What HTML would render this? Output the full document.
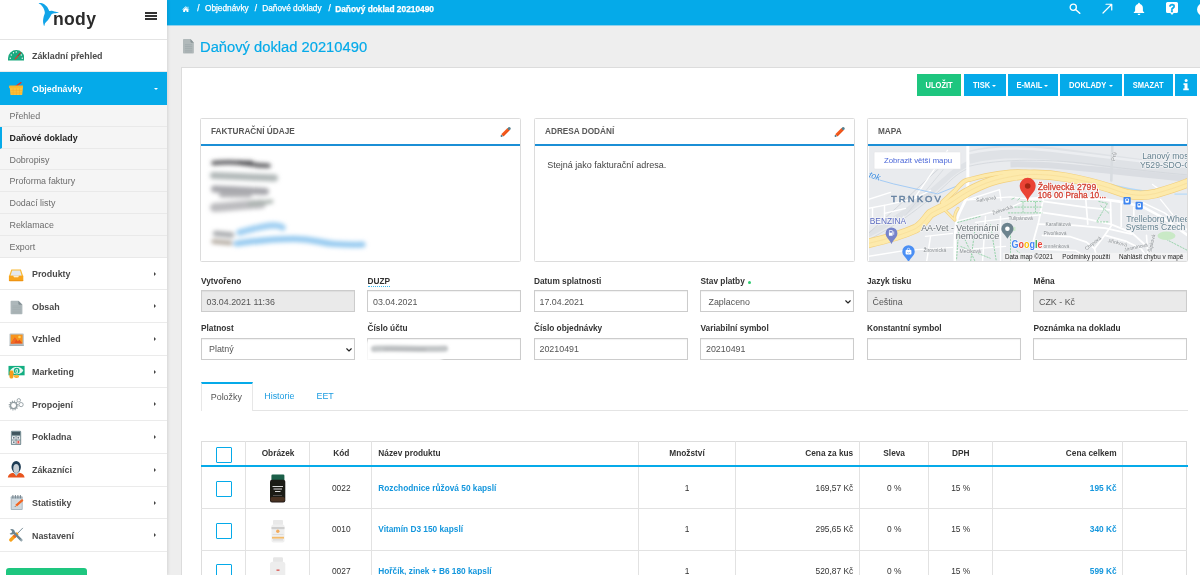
<!DOCTYPE html>
<html lang="cs">
<head>
<meta charset="utf-8">
<title>Daňový doklad 20210490</title>
<style>
*{box-sizing:border-box;margin:0;padding:0}
html,body{width:1200px;height:575px;overflow:hidden;background:#eeeeee;font-family:"Liberation Sans",sans-serif;color:#333;font-size:8.75px}
.abs{position:absolute}
#page{will-change:transform;position:relative;width:1200px;height:575px;overflow:hidden;background:#eeeeee}

/* ---------- sidebar ---------- */
#side{position:absolute;left:0;top:0;width:167px;height:575px;background:#fff;box-shadow:1px 0 3px rgba(0,0,0,.11);z-index:5}
#side .head{position:absolute;left:0;top:0;width:167px;height:39.5px;border-bottom:1px solid #e4e4e4}
.mi{position:absolute;left:0;width:167px;height:32.75px;border-bottom:1px solid #ebebeb;font-weight:bold;font-size:8.9px;color:#4a4a4a;letter-spacing:0}
.mi span.t{position:absolute;left:32px;top:11.400px;line-height:10px;white-space:nowrap}
.mi .car{position:absolute;left:153.500px;top:14.100px;width:0;height:0;border-left:2.6px solid #444;border-top:2.4px solid transparent;border-bottom:2.4px solid transparent}
.mi .ic{position:absolute;line-height:0}
.mi .card{position:absolute;left:153.5px;top:15.5px;width:0;height:0;border-top:2.6px solid #fff;border-left:2.6px solid transparent;border-right:2.6px solid transparent}
.mi.act{background:#05aae9;color:#fff;border-bottom-color:#05aae9}
.sub{position:absolute;left:0;width:167px;height:21.78px;background:#f5f5f5;border-bottom:1px solid #e9e9e9;font-size:8.9px;color:#6c6c6c}
.sub span{position:absolute;left:9.5px;top:6px;line-height:10px;white-space:nowrap}
.sub.cur{color:#222;font-weight:bold;border-left:2px solid #05aae9}
.sub.cur span{left:7.5px}

/* ---------- top bar ---------- */
#top{position:absolute;left:167px;top:0;width:1033px;height:25px;background:#05aae9;color:#fff}
.bc{position:absolute;top:4px;font-size:8.280px;line-height:10px;color:#fff;white-space:nowrap;-webkit-text-stroke:.25px #fff}
#crumb{position:absolute;left:15.5px;top:3.5px;font-size:8.3px;font-weight:bold;line-height:10px;white-space:nowrap;letter-spacing:-.05px}

/* ---------- title ---------- */
#title{position:absolute;left:200.4px;top:37.100px;font-size:15.250px;transform:scaleX(.966);transform-origin:0 50%;-webkit-text-stroke:.2px #05aae9;line-height:19px;color:#05aae9;white-space:nowrap}

/* ---------- panel ---------- */
#panel{position:absolute;left:180.5px;top:67px;width:1030px;height:520px;background:#fff;border:1px solid #dcdcdc}
.btn{position:absolute;top:74px;height:22px;background:#05aae9;color:#fff;font-weight:bold;font-size:8.400px;text-align:center;line-height:23px;white-space:nowrap}
.btn u{display:inline-block;text-decoration:none;transform:scaleX(.9);transform-origin:50% 50%;margin:0 -2px}
.btn.g{background:#1ec67f}
.btn i{display:inline-block;width:0;height:0;border-top:2.700px solid #fff;border-left:2.600px solid transparent;border-right:2.600px solid transparent;vertical-align:middle;margin-left:2.300px;margin-top:.5px}

.box{position:absolute;top:118px;width:321px;height:143.5px;border:1px solid #dcdcdc;border-radius:1.5px;background:#fff}
.box .bh{position:absolute;left:0;top:0;right:0;height:26.600px;border-bottom:2px solid #1b8fd6}
.box .bh b{position:absolute;left:10px;top:7px;font-size:9px;line-height:10px;color:#585858;white-space:nowrap;transform:scaleX(.915);transform-origin:0 50%}

.lbl{position:absolute;font-weight:bold;font-size:8.3px;line-height:10px;color:#333;white-space:nowrap}
.inp{position:absolute;width:154px;height:21.500px;border:1px solid #ccc;background:#fff;font-size:8.9px;line-height:10px;color:#555;box-shadow:inset 0 1px 1px rgba(0,0,0,.06)}
.inp span{position:absolute;left:5px;top:5.6px;white-space:nowrap}
.inp.dis{background:#eaeaea}
.inp.r2 span{top:4.600px}
.inp.sel span{left:7.500px}
.inp.sel.r2 span{top:4.600px}
.inp .chv{position:absolute;left:144.300px;top:8.800px}

/* ---------- table ---------- */
#tbl{position:absolute;left:200.500px;top:441px;width:986.500px;height:140px;border-left:1px solid #ddd;border-right:1px solid #ddd;border-top:1px solid #ddd}
.vl{position:absolute;top:441px;width:1px;height:140px;background:#e2e2e2}
.hl{position:absolute;left:200.5px;width:986.5px;height:1px;background:#e2e2e2}
.th{position:absolute;top:447.800px;font-weight:bold;font-size:8.3px;line-height:10px;color:#333;white-space:nowrap}
.td{position:absolute;font-size:8.400px;line-height:10px;color:#333;white-space:nowrap}
.td.a{color:#1597dd;font-weight:bold;font-size:8.3px}
.cb{position:absolute;left:216px;width:16px;height:16px;border:1.6px solid #05aae9;border-radius:1px;background:#fff}
</style>
</head>
<body>
<div id="page">

<!-- MAIN BG / TOP BAR -->
<div id="top">
<svg class="abs" style="left:15.200px;top:5.600px" width="7.600" height="6" viewBox="0 0 30 24"><path d="M15 1 L29.500 13.500 l-1.600 1.900 L15 4.500 2.100 15.400 .5 13.500z M15 6.500 l10.500 8.800 V23 a1 1 0 0 1-1 1 H18 v-6.500 h-6 V24 H5.500 a1 1 0 0 1-1-1 v-7.700z M22 2.500 h3.500 v5.500 l-3.500-3z" fill="#fff"/></svg>
<div class="bc" style="left:30.300px">/</div>
<div class="bc" style="left:38px">Objednávky</div>
<div class="bc" style="left:87.800px">/</div>
<div class="bc" style="left:95.300px">Daňové doklady</div>
<div class="bc" style="left:161.600px">/</div>
<div class="bc" style="left:168.200px;font-weight:bold;font-size:8.360px">Daňový doklad 20210490</div>
<!-- right icons -->
<svg class="abs" style="left:902.300px;top:3px" width="12" height="11" viewBox="0 0 24 22"><circle cx="8.500" cy="8.500" r="6.200" fill="none" stroke="#fff" stroke-width="2.600"/><path d="M13 13 L21.500 20.500" stroke="#fff" stroke-width="3" stroke-linecap="round"/></svg>
<svg class="abs" style="left:935px;top:3.200px" width="11" height="11" viewBox="0 0 22 22"><path d="M2 20 L19 3 M8 2.500 H19.500 V14" fill="none" stroke="#fff" stroke-width="2.400" stroke-linecap="round" stroke-linejoin="round"/></svg>
<svg class="abs" style="left:966.300px;top:1.900px" width="12" height="13.500" viewBox="0 0 24 27"><path d="M12 1.500 a1.800 1.800 0 0 1 1.800 1.800 v.7 c3.800 .9 6 4 6 8 v6 l2.700 3 v1 H1.500 v-1 l2.700-3 v-6 c0-4 2.200-7.100 6-8 v-.7 A1.800 1.800 0 0 1 12 1.500z M9.300 23.500 h5.400 a2.700 2.700 0 0 1-5.400 0z" fill="#fff"/></svg>
<svg class="abs" style="left:999px;top:2.300px" width="12" height="13" viewBox="0 0 24 26"><path d="M3 0 h18 a3 3 0 0 1 3 3 v16 a3 3 0 0 1-3 3 h-5.500 l-3.500 4 -3.500-4 H3 a3 3 0 0 1-3-3 V3 a3 3 0 0 1 3-3z" fill="#fff"/><text x="12" y="19" font-size="22" font-weight="bold" text-anchor="middle" fill="#05aae9" stroke="#05aae9" stroke-width=".8" font-family="Liberation Sans">?</text></svg>
<div class="abs" style="left:1029.800px;top:2.500px;width:13px;height:13px;border-radius:50%;background:#fff"></div>
</div>

<svg class="abs" style="left:182.900px;top:39.300px" width="11.600" height="14.600" viewBox="0 0 24 28" preserveAspectRatio="none"><path d="M1.500 0 h14 l7 7 v19.500 a1.500 1.500 0 0 1-1.500 1.500 h-19.500 a1.500 1.500 0 0 1-1.500-1.500 v-25 a1.500 1.500 0 0 1 1.500-1.500z" fill="#b1b9ba"/><path d="M15.500 0 l7 7 h-5.500 a1.500 1.500 0 0 1-1.500-1.500z" fill="#899497"/><g stroke="#9aa4a7" stroke-width="1.200"><path d="M4 11 h15 M4 14.500 h15 M4 18 h15 M4 21.500 h15 M4 25 h15"/></g></svg>
<div class="abs" style="left:167px;top:25px;width:1033px;height:1px;background:#90d1ec"></div>
<div id="title">Daňový doklad 20210490</div>

<div id="panel"></div>

<!-- buttons -->
<div class="btn g" style="left:917px;width:44.25px"><u>ULOŽIT</u></div>
<div class="btn" style="left:964px;width:41.75px"><u>TISK</u><i></i></div>
<div class="btn" style="left:1007.75px;width:50.25px"><u>E-MAIL</u><i></i></div>
<div class="btn" style="left:1060.25px;width:61.75px"><u>DOKLADY</u><i></i></div>
<div class="btn" style="left:1124.25px;width:48.5px"><u>SMAZAT</u></div>
<div class="btn" style="left:1175.25px;width:21.5px"><svg style="position:absolute;left:8px;top:5.300px" width="6" height="11.500" viewBox="0 0 12 23"><circle cx="6.200" cy="3.200" r="3" fill="#fff"/><path d="M1 8.500 h8 v10.500 h2.500 v3.500 h-11 v-3.500 h2.500 v-7 h-2z" fill="#fff"/></svg></div>

<!-- boxes -->
<div class="box" style="left:200px;overflow:hidden"><div class="bh"><b>FAKTURAČNÍ ÚDAJE</b></div>
<svg class="abs" style="left:0;top:27px" width="319" height="115" viewBox="201.500 146 319 115">
<defs><filter id="bl" x="-20%" y="-80%" width="140%" height="260%"><feGaussianBlur stdDeviation="1.500"/></filter><filter id="bl2" x="-20%" y="-80%" width="140%" height="260%"><feGaussianBlur stdDeviation="2.100"/></filter></defs>
<g fill="none" stroke-linecap="round" filter="url(#bl2)">
<path d="M214 163 C230 161.500 242 162.500 250 164 S266 165.800 269 165.800" stroke="#626265" stroke-width="4.600"/>
<path d="M240 162.500 h12" stroke="#4a4a4d" stroke-width="3.500"/>
<path d="M214 175.500 C235 176.500 255 177.500 275 178" stroke="#b0b7b7" stroke-width="7"/>
<path d="M215 189 C232 189.500 250 191 266 191.500" stroke="#a6a6ab" stroke-width="7"/>
<path d="M222 195 h28" stroke="#b0b0b4" stroke-width="5"/>
<path d="M215 207.500 C230 206.500 245 205 262 204" stroke="#bcbcbf" stroke-width="9"/>
<path d="M250 204 L272 201.500" stroke="#aab3af" stroke-width="4"/>
<path d="M216 233.500 L232 235" stroke="#a9abae" stroke-width="5.500"/>
<path d="M240 232.500 C250 230 262 226 272 225.500 S282 227 283 227.500" stroke="#9fcff2" stroke-width="6.500"/>
<path d="M214 241.500 L231 243" stroke="#b3aaa0" stroke-width="4.500"/>
<path d="M237 243.500 C255 241 275 238.800 295 238.800 S320 243 335 244 S355 245 363 244.500" stroke="#96caf0" stroke-width="6.200"/>
</g></svg>
<svg class="abs" style="left:298.500px;top:6.800px" width="12" height="12" viewBox="499.500 125.800 12 12"><path d="M501.900 135.100 L508.100 128.900" stroke="#f4581c" stroke-width="3.200"/><path d="M502.600 135.800 L508.800 129.600" stroke="#e04a10" stroke-width="0.900" opacity=".7"/><circle cx="508.700" cy="128.300" r="1.500" fill="#547f8d"/><circle cx="501.100" cy="135.800" r="1.050" fill="#4b7786"/></svg>
</div>
<div class="box" style="left:534px"><div class="bh"><b>ADRESA DODÁNÍ</b></div><svg class="abs" style="left:298.500px;top:6.800px" width="12" height="12" viewBox="499.500 125.800 12 12"><path d="M501.900 135.100 L508.100 128.900" stroke="#f4581c" stroke-width="3.200"/><path d="M502.600 135.800 L508.800 129.600" stroke="#e04a10" stroke-width="0.900" opacity=".7"/><circle cx="508.700" cy="128.300" r="1.500" fill="#547f8d"/><circle cx="501.100" cy="135.800" r="1.050" fill="#4b7786"/></svg>

  <div class="abs" style="left:12.300px;top:40.500px;font-size:9px;line-height:10px;color:#444;white-space:nowrap">Stejná jako fakturační adresa.</div>
</div>
<div class="box" style="left:866.5px;overflow:hidden"><div class="bh"><b>MAPA</b></div>
<!--MAP-->
<svg class="abs" style="left:1px;top:26.600px" width="319" height="115.400" viewBox="868.500 145.600 319 115.400" font-family="Liberation Sans, sans-serif">
<rect x="860" y="140" width="340" height="130" fill="#e9ebee"/>
<!-- rail yard bands -->
<g fill="none" stroke-linecap="butt">
<path d="M968 157 C990 151 1020 150 1050 153 C1090 158 1140 165 1192 172" stroke="#dfe2e6" stroke-width="13"/>
<path d="M1010 164 C1050 163 1100 170 1192 179" stroke="#dadde2" stroke-width="6"/>
<path d="M968 153 C990 147.500 1020 147 1050 150 C1090 155 1140 161 1192 167" stroke="#eceef1" stroke-width="2.500"/>
<path d="M858 239 C895 222 925 197 945 179 C952 172 960 167 968 163" stroke="#dfe2e6" stroke-width="5.500"/>
<path d="M858 244 C898 226 930 199 948 182 C955 175 961 171 968 168" stroke="#d6dade" stroke-width="1"/>
<path d="M938 168.500 L867 234" stroke="#cdd1d6" stroke-width=".8"/>
<path d="M943 169 L905 215" stroke="#d3d7db" stroke-width=".7"/>
<path d="M968 166 C1000 158 1050 158 1100 165 C1130 169 1160 172 1192 175" stroke="#d2d6db" stroke-width=".8"/>
</g>
<!-- streets (white) -->
<g fill="none" stroke="#fff" stroke-width="1.450" stroke-linecap="round" stroke-linejoin="round">
<path d="M967.300 145 V187.500" stroke-width="3"/>
<path d="M966.500 196.500 C963 205 957.500 213 956 221 C954.500 232 954 246 954.500 262" stroke-width="2.800"/>
<path d="M1111.800 145 L1110.800 180" stroke="#d8dce0" stroke-width="2.600"/>
<path d="M966.500 199.600 L999 189.200 L1000.600 200.200"/>
<path d="M968 199.500 L1010 196.500 L1027 198.500"/>
<path d="M956 221 L1010 206.900 L1022 201.500 L1040 201.200"/>
<path d="M975 222 L1010 217.500 L1040 214.500"/>
<path d="M1027 198.500 L1048 197.500 L1100 198.500 L1123 201.700 L1143.300 207 L1163.300 217.700 L1187.300 235" stroke-width="2.600"/>
<path d="M1141 201.500 L1164 212.500 L1187.300 230" stroke-width="1.500"/>
<path d="M1043 201 L1086 207 L1110 209.500" stroke-width="1.700"/>
<path d="M1039.300 211.700 L1084.700 218.300 L1110 223.700 L1131.300 232.300 L1146 245.700" stroke-width="1.900"/>
<path d="M1038 223.700 L1074 225 L1104.700 227.700 L1131.300 233.700" stroke-width="1.700"/>
<path d="M1042 235 L1070 236.300 L1086 241.700 L1094 248.300 L1098 262" stroke-width="1.700"/>
<path d="M1104.700 235 L1126 241 L1140.700 248.300 L1150 262" stroke-width="1.700"/>
<path d="M1085.300 199 L1087.300 223.700 M1110 201 L1110.700 225.700 L1104 235 L1094 248.300 M1120.700 203 V226 M1133.300 207 V215" stroke-width="1.700"/>
<path d="M1146 235 L1147.300 253.700" stroke-width="1.600"/>
<path d="M1042.700 199 L1038 222 L1033 240" stroke-width="1.800"/>
<path d="M1033 248.500 L1075 250 L1094 262" stroke-width="1.500"/>
<path d="M1160 199 L1172 214" stroke-width="1.300"/>
<path d="M1152 184 C1156 188 1158 186 1157 192" stroke-width="1.300"/>
<path d="M868 208 L886 204.500 L912 199 L930 190"/>
<path d="M868 222.500 H884 V205"/>
<path d="M872 208 V222"/>
<path d="M884 213 L905 208"/>
<path d="M868 199 L890 192"/>
<path d="M905 250 L952 247"/>
<path d="M925 236 L952 233"/>
<path d="M930 236 L926 262"/>
<path d="M955 238 L1000 236"/>
<path d="M955 250 L1005 246"/>
<path d="M985 216 L982 262"/>
<path d="M1000 216 V262"/>
<path d="M868 256 L905 250"/>
<path d="M947 150 L915 196" stroke-width="1.300"/>
</g>
<!-- water -->
<path d="M866 176 L893 183.500 L937 193.500 L958 185" fill="none" stroke="#9cc7f5" stroke-width=".9"/>
<path d="M1112 184.500 C1122 186.500 1134 191 1150 190.500" fill="none" stroke="#b3d8f7" stroke-width="1.500"/>
<path d="M1174 193.700 H1187" fill="none" stroke="#b8dbf8" stroke-width="1.300"/>
<!-- green paths -->
<g fill="none" stroke="#8fd0a4" stroke-width=".9" stroke-dasharray="2.200 .9">
<path d="M1020 201.200 H1042 M1014 206.700 H1042 M1007.500 212.500 H1042 M1022.500 201 V212 M1035 201 V212"/>
<path d="M956.800 222.100 L980 216 M958 232 L956 260 M963 236 L975 262 M975 225 L970 262 M960 246 L990 258 M990 224 L996 262"/>
<path d="M1010 226 V262 M1016 250 L1030 262"/>
<path d="M1098 201 L1107 203 L1096 221.500 L1108 221.500 M1100 205 L1109 213.500"/>
<path d="M1160 236 L1187 250"/>
<path d="M1100 187 l5 -1 -3 4"/>
</g>
<path d="M1011 199 l3 -1.500 M1017 200 l2.500 -2.500" stroke="#8fd0a4" stroke-width=".8" fill="none"/>
<rect x="1010.500" y="226.500" width="4.500" height="4" fill="#cfeccf"/>
<ellipse cx="1166" cy="235.300" rx="9" ry="4.300" fill="#c9e9c6"/>
<!-- highway -->
<g fill="none" stroke-linecap="round" stroke-linejoin="round">
<path d="M856 246 L868 243 C890 237.800 905 233 915 228.300 C922 224.700 926 217 930 213.200 C937 209 943 207 948.300 203.800 C955 199.500 960 195.500 966.500 191.900 C973 188 979 185.500 984.800 183.100 C993 180 1001 178 1010 176.400 C1017 175 1021 174.500 1026 174.200 C1040 173.500 1055 175 1066 177 C1082 180 1096 183.500 1109 187.600 C1117 190.500 1124 193 1130 194 C1139 195.500 1147 195 1155.600 193 C1166 190 1176 187 1186 183 L1196 178.500" stroke="#f2d07f" stroke-width="9.600"/>
<path d="M942 202 C946 198 950 194.500 954.400 190.400 C958 186 961 182 965.300 180.100 C967 179.300 968.500 179 970.200 178.900 C975 177.500 980 176.200 984.800 175.200 C993 173.500 1001 172.300 1010 171.600 C1018 171 1024 171.300 1032 172.300" stroke="#f2d07f" stroke-width="4.800"/>
<path d="M944 209.500 C947.500 212.500 950.500 216.500 954.400 219.700 M957.500 208 C955 211.500 953.500 215.500 954.400 219.700" stroke="#f2d07f" stroke-width="3"/>
<path d="M856 246 L868 243 C890 237.800 905 233 915 228.300 C922 224.700 926 217 930 213.200 C937 209 943 207 948.300 203.800 C955 199.500 960 195.500 966.500 191.900 C973 188 979 185.500 984.800 183.100 C993 180 1001 178 1010 176.400 C1017 175 1021 174.500 1026 174.200 C1040 173.500 1055 175 1066 177 C1082 180 1096 183.500 1109 187.600 C1117 190.500 1124 193 1130 194 C1139 195.500 1147 195 1155.600 193 C1166 190 1176 187 1186 183 L1196 178.500" stroke="#fdeaac" stroke-width="8.200"/>
<path d="M942 202 C946 198 950 194.500 954.400 190.400 C958 186 961 182 965.300 180.100 C967 179.300 968.500 179 970.200 178.900 C975 177.500 980 176.200 984.800 175.200 C993 173.500 1001 172.300 1010 171.600 C1018 171 1024 171.300 1032 172.300" stroke="#fdeaac" stroke-width="3.500"/>
<path d="M944 209.500 C947.500 212.500 950.500 216.500 954.400 219.700 M957.500 208 C955 211.500 953.500 215.500 954.400 219.700" stroke="#fdeaac" stroke-width="1.800"/>
<path d="M856 246 L868 243 C890 237.800 905 233 915 228.300 C922 224.700 926 217 930 213.200 C937 209 943 207 948.300 203.800 C955 199.500 960 195.500 966.500 191.900 C973 188 979 185.500 984.800 183.100 C993 180 1001 178 1010 176.400 C1017 175 1021 174.500 1026 174.200 C1040 173.500 1055 175 1066 177 C1082 180 1096 183.500 1109 187.600 C1117 190.500 1124 193 1130 194 C1139 195.500 1147 195 1155.600 193 C1166 190 1176 187 1186 183 L1196 178.500" stroke="#f6dc98" stroke-width=".7"/>
</g>
<!-- labels -->
<text x="890.500" y="201.800" font-size="9.500" fill="#6682a1" textLength="49.800" lengthAdjust="spacing" stroke="#6682a1" stroke-width=".45">TRNKOV</text>
<text x="869.300" y="223.600" font-size="8.500" fill="#5c6bc0" stroke="#f4f5f7" stroke-width="1.600" paint-order="stroke" textLength="36.200" lengthAdjust="spacingAndGlyphs">BENZINA</text>
<g font-size="8.700" fill="#6b7378" stroke="#f4f5f6" stroke-width="1.600" paint-order="stroke">
<text x="920.700" y="230.200" textLength="77.500" lengthAdjust="spacingAndGlyphs">AA-Vet - Veterinární</text>
<text x="955.300" y="238.700" textLength="43.500" lengthAdjust="spacingAndGlyphs">nemocnice</text>
</g>
<g font-size="8.600" fill="#668290" stroke="#f2f3f5" stroke-width="1.600" paint-order="stroke">
<text x="1141.700" y="158.900">Lanový most</text>
<text x="1139.400" y="167.900">Y529-SDO-ČD</text>
<text x="1125.700" y="221.200">Trelleborg Wheel</text>
<text x="1125.200" y="230">Systems Czech</text>
</g>
<g font-size="8.600" fill="#d23f31">
<text x="1037.200" y="189.200" textLength="61" lengthAdjust="spacingAndGlyphs" stroke="#fff" stroke-width="2" stroke-linejoin="round">Želivecká 2799,</text>
<text x="1037.200" y="197.600" textLength="68.500" lengthAdjust="spacingAndGlyphs" stroke="#fff" stroke-width="2" stroke-linejoin="round">106 00 Praha 10...</text>
<text x="1037.200" y="189.200" textLength="61" lengthAdjust="spacingAndGlyphs" stroke="#d23f31" stroke-width=".3">Želivecká 2799,</text>
<text x="1037.200" y="197.600" textLength="68.500" lengthAdjust="spacingAndGlyphs" stroke="#d23f31" stroke-width=".3">106 00 Praha 10...</text>
</g>
<g font-size="5" fill="#8a8f94" stroke="#f1f2f3" stroke-width=".8" paint-order="stroke">
<text x="976" y="201.800" transform="rotate(-9 976 201.800)">Šalvijová</text>
<text x="992.500" y="214.300" transform="rotate(-18 992.500 214.300)">Želivecká</text>
<text x="1008" y="219.200">Tulipánová</text>
<text x="923" y="251.200">Žirovnická</text>
<text x="959" y="253">Mečíková</text>
<text x="1045" y="225.800">Karafiátová</text>
<text x="1043" y="234.500">Pivoňková</text>
<text x="1043" y="247.300">omněnková</text>
<text x="1086" y="250" transform="rotate(-38 1086 250)">Chrpová</text>
<text x="1107" y="241.500" transform="rotate(14 1107 241.500)">Jiřinková</text>
<text x="1124" y="251" transform="rotate(-12 1124 251)">Jasmínová</text>
<text x="1151" y="252" transform="rotate(-78 1151 252)">Šípková</text>
<text x="1114.500" y="161" transform="rotate(-80 1114.500 161)" font-size="5.800">Prů</text>
</g>
<text x="863.500" y="175" font-size="8.600" fill="#3f8ee0" font-style="italic" transform="rotate(19 863.500 175)" stroke="#eef0f2" stroke-width="1" paint-order="stroke">otok</text>
<!-- poi markers -->
<g>
<path d="M891 243.500 c-2.800 -5 -5.900 -6.800 -5.900 -10.600 a5.900 5.900 0 0 1 11.800 0 c0 3.800 -3.100 5.600 -5.900 10.600z" fill="#7683ca"/>
<rect x="888.400" y="229.800" width="3.700" height="5.600" rx=".5" fill="#fff"/><rect x="889.100" y="230.600" width="2.300" height="1.700" fill="#7683ca"/><path d="M893.200 231 v3.400" stroke="#fff" stroke-width=".7"/>
<path d="M908 261.500 c-3 -5 -6.200 -6.500 -6.200 -10.500 a6.200 6.200 0 0 1 12.400 0 c0 4 -3.200 5.500 -6.200 10.500z" fill="#4b8ff4"/>
<rect x="905.100" y="249.600" width="5.800" height="4.400" rx=".7" fill="#fff"/><path d="M906.600 249.600 a1.400 1.700 0 0 1 2.800 0" fill="none" stroke="#fff" stroke-width=".7"/><path d="M906.800 251.600 a1.200 1 0 0 0 2.400 0" fill="none" stroke="#4b8ff4" stroke-width=".5"/>
<path d="M1006.900 238.400 c-3 -5 -6.100 -6.500 -6.100 -10 a6.100 6.100 0 0 1 12.200 0 c0 3.500 -3.100 5 -6.100 10z" fill="#6c838e"/><circle cx="1006.900" cy="228.300" r="2.300" fill="#fff"/>
<g fill="#3d85f0"><rect x="1123" y="196.600" width="7.200" height="7.600" rx=".8"/><rect x="1135.100" y="201.400" width="7.200" height="7.600" rx=".8"/></g>
<g fill="#fff"><rect x="1124.800" y="198" width="3.600" height="4.300" rx=".8"/><rect x="1136.900" y="202.800" width="3.600" height="4.300" rx=".8"/></g>
<g fill="#3d85f0"><rect x="1125.600" y="198.800" width="2" height="1.600"/><rect x="1137.700" y="203.600" width="2" height="1.600"/></g>
</g>
<!-- red pin -->
<path d="M1027.200 201.200 c-1.200 -6.500 -8 -9 -8 -15.800 a8 8 0 0 1 16 0 c0 6.800 -6.800 9.300 -8 15.800z" fill="#ea4335"/>
<circle cx="1027.200" cy="185.600" r="2.800" fill="#a52714"/>
<!-- zobrazit button -->
<rect x="873.600" y="151.600" width="86.500" height="17" rx="1" fill="#fff" stroke="#e2e3e5" stroke-width=".5"/>
<text x="883.500" y="162.700" font-size="7.600" fill="#4a66d8" textLength="68" lengthAdjust="spacingAndGlyphs">Zobrazit větší mapu</text>
<!-- google logo -->
<g font-size="10.700" font-weight="bold" stroke="#fff" stroke-width="1.200" paint-order="stroke">
<text x="1011" y="247.700" textLength="31" lengthAdjust="spacingAndGlyphs"><tspan fill="#4285f4">G</tspan><tspan fill="#ea4335">o</tspan><tspan fill="#fbbc05">o</tspan><tspan fill="#4285f4">g</tspan><tspan fill="#34a853">l</tspan><tspan fill="#ea4335">e</tspan></text>
</g>
<!-- attribution -->
<rect x="1002.500" y="252.400" width="185" height="8" fill="#f5f5f5" opacity=".75"/>
<g font-size="7.100" fill="#222">
<text x="1004.500" y="258.500" textLength="48" lengthAdjust="spacingAndGlyphs">Data map ©2021</text>
<text x="1061.800" y="258.500" textLength="48" lengthAdjust="spacingAndGlyphs">Podmínky použití</text>
<text x="1118.500" y="258.500" textLength="64.300" lengthAdjust="spacingAndGlyphs">Nahlásit chybu v mapě</text>
</g>
</svg>
<!--/MAP-->
</div>


<!-- form -->
<div class="lbl" style="left:201.0px;top:276.3px">Vytvořeno</div>
<div class="inp dis" style="left:200.5px;top:290px;height:22px"><span>03.04.2021 11:36</span></div>
<div class="lbl" style="left:367.500px;top:276.800px;line-height:9px;border-bottom:1px dotted #3db8ee">DUZP</div>
<div class="inp" style="left:367px;top:290px;height:22px"><span>03.04.2021</span></div>
<div class="lbl" style="left:534.0px;top:276.3px">Datum splatnosti</div>
<div class="inp" style="left:533.5px;top:290px;height:22px"><span>17.04.2021</span></div>
<div class="lbl" style="left:700.5px;top:276.3px">Stav platby <span style="display:inline-block;width:3px;height:3px;border-radius:50%;background:#2ecc71;vertical-align:middle;margin-left:1px;margin-top:1px"></span></div>
<div class="inp sel" style="left:700px;top:290px;height:22px"><span>Zaplaceno</span><svg class="chv" viewBox="0 0 12 8" width="6" height="4"><path d="M1.500 1.500L6 6l4.500-4.500" fill="none" stroke="#222" stroke-width="2.200" stroke-linecap="round" stroke-linejoin="round"/></svg></div>
<div class="lbl" style="left:867.0px;top:276.3px">Jazyk tisku</div>
<div class="inp dis" style="left:866.5px;top:290px;height:22px"><span>Čeština</span></div>
<div class="lbl" style="left:1033.5px;top:276.3px">Měna</div>
<div class="inp dis" style="left:1033px;top:290px;height:22px"><span>CZK - Kč</span></div>
<div class="lbl" style="left:201.0px;top:323.3px">Platnost</div>
<div class="inp sel r2" style="left:200.5px;top:338px"><span>Platný</span><svg class="chv" viewBox="0 0 12 8" width="6" height="4"><path d="M1.500 1.500L6 6l4.500-4.500" fill="none" stroke="#222" stroke-width="2.200" stroke-linecap="round" stroke-linejoin="round"/></svg></div>
<div class="lbl" style="left:367.5px;top:323.3px">Číslo účtu</div>
<div class="inp r2" style="left:367px;top:338px"></div>
<div class="lbl" style="left:534.0px;top:323.3px">Číslo objednávky</div>
<div class="inp r2" style="left:533.5px;top:338px"><span>20210491</span></div>
<div class="lbl" style="left:700.5px;top:323.3px">Variabilní symbol</div>
<div class="inp r2" style="left:700px;top:338px"><span>20210491</span></div>
<div class="lbl" style="left:867.0px;top:323.3px">Konstantní symbol</div>
<div class="inp r2" style="left:866.5px;top:338px"></div>
<div class="lbl" style="left:1033.5px;top:323.3px">Poznámka na dokladu</div>
<div class="inp r2" style="left:1033px;top:338px"></div>
<svg class="abs" style="left:360px;top:334px" width="165" height="32" viewBox="360 334 165 32"><g filter="url(#bl)"><path d="M367.500 343 V360.500 H440" fill="none" stroke="#fff" stroke-width="4.500" stroke-linecap="round" opacity=".95"/><path d="M374 348.800 C395 347.600 420 349.800 445 348.600" fill="none" stroke="#c3c6c8" stroke-width="6.200" stroke-linecap="round"/><path d="M385 349.500 h40" fill="none" stroke="#b6b8ba" stroke-width="2.500" stroke-linecap="round"/></g></svg>
<!-- tabs -->
<div class="abs" style="left:200.5px;top:410px;width:987px;height:1px;background:#e4e4e4"></div>
<div class="abs" style="left:200.5px;top:382px;width:52px;height:29px;background:#fff;border:1px solid #e7e7e7;border-bottom:none;border-top:2px solid #05aae9"></div>
<div class="abs" style="left:210.8px;top:391.800px;font-size:8.900px;line-height:10px;color:#555">Položky</div>
<div class="abs" style="left:264.300px;top:390.500px;font-size:8.900px;line-height:10px;color:#1a9be0">Historie</div>
<div class="abs" style="left:316.500px;top:390.500px;font-size:8.900px;line-height:10px;color:#1a9be0">EET</div>
<!-- table -->
<div id="tbl"></div>
<div class="vl" style="left:245px"></div>
<div class="vl" style="left:309px"></div>
<div class="vl" style="left:371px"></div>
<div class="vl" style="left:638px"></div>
<div class="vl" style="left:735px"></div>
<div class="vl" style="left:859px"></div>
<div class="vl" style="left:928px"></div>
<div class="vl" style="left:992px"></div>
<div class="vl" style="left:1122px"></div>
<div class="abs" style="left:200.5px;top:465.200px;width:987px;height:2.200px;background:#05aae9"></div>
<div class="hl" style="top:508px"></div>
<div class="hl" style="top:550px"></div>
<div class="cb" style="top:447px"></div>
<div class="th" style="left:245.5px;width:65.0px;top:447.800px;text-align:center">Obrázek</div>
<div class="th" style="left:309.5px;width:63.5px;top:447.800px;text-align:center">Kód</div>
<div class="th" style="left:378.300px">Název produktu</div>
<div class="th" style="left:638px;width:98px;top:447.800px;text-align:center">Množství</div>
<div class="th" style="left:653.2px;width:200px;top:447.800px;text-align:right">Cena za kus</div>
<div class="th" style="left:859.3px;width:69.70000000000005px;top:447.800px;text-align:center">Sleva</div>
<div class="th" style="left:928px;width:65.5px;top:447.800px;text-align:center">DPH</div>
<div class="th" style="left:916.5999999999999px;width:200px;top:447.800px;text-align:right">Cena celkem</div>
<div class="cb" style="top:481px"></div>
<div class="td" style="left:309.5px;width:63.5px;top:482.500px;text-align:center">0022</div>
<div class="td a" style="left:378.300px;top:482.500px">Rozchodnice růžová 50 kapslí</div>
<div class="td" style="left:638px;width:98px;top:482.500px;text-align:center">1</div>
<div class="td" style="left:653.2px;width:200px;top:482.500px;text-align:right">169,57 Kč</div>
<div class="td" style="left:859.3px;width:69.70000000000005px;top:482.500px;text-align:center">0 %</div>
<div class="td" style="left:928px;width:65.5px;top:482.500px;text-align:center">15 %</div>
<div class="td a" style="left:916.5999999999999px;width:200px;top:482.500px;text-align:right">195 Kč</div>
<div class="cb" style="top:522.5px"></div>
<div class="td" style="left:309.5px;width:63.5px;top:524.200px;text-align:center">0010</div>
<div class="td a" style="left:378.300px;top:524.200px">Vitamín D3 150 kapslí</div>
<div class="td" style="left:638px;width:98px;top:524.200px;text-align:center">1</div>
<div class="td" style="left:653.2px;width:200px;top:524.200px;text-align:right">295,65 Kč</div>
<div class="td" style="left:859.3px;width:69.70000000000005px;top:524.200px;text-align:center">0 %</div>
<div class="td" style="left:928px;width:65.5px;top:524.200px;text-align:center">15 %</div>
<div class="td a" style="left:916.5999999999999px;width:200px;top:524.200px;text-align:right">340 Kč</div>
<div class="cb" style="top:564px"></div>
<div class="td" style="left:309.5px;width:63.5px;top:565.900px;text-align:center">0027</div>
<div class="td a" style="left:378.300px;top:565.900px">Hořčík, zinek + B6 180 kapslí</div>
<div class="td" style="left:638px;width:98px;top:565.900px;text-align:center">1</div>
<div class="td" style="left:653.2px;width:200px;top:565.900px;text-align:right">520,87 Kč</div>
<div class="td" style="left:859.3px;width:69.70000000000005px;top:565.900px;text-align:center">0 %</div>
<div class="td" style="left:928px;width:65.5px;top:565.900px;text-align:center">15 %</div>
<div class="td a" style="left:916.5999999999999px;width:200px;top:565.900px;text-align:right">599 Kč</div>

<svg class="abs" style="left:262px;top:468px" width="32" height="110" viewBox="262 468 32 110">
<defs><filter id="b3" x="-10%" y="-10%" width="120%" height="120%"><feGaussianBlur stdDeviation="0.550"/></filter></defs>
<g filter="url(#b3)">
<rect x="271.400" y="474.500" width="13" height="6" rx="1.200" fill="#1d6048"/>
<rect x="270" y="479.800" width="15.300" height="22.600" rx="2" fill="#1f1a17"/>
<rect x="270.600" y="497" width="14.100" height="4.600" rx="1.500" fill="#4a3323"/>
<path d="M272.500 486.500 h10.500 M273.500 489 h8.500 M275 491.500 h5.500" stroke="#d9d9d9" stroke-width="1.100"/>
<path d="M273 495.500 h9" stroke="#6a6a6a" stroke-width="0.700"/>
<rect x="273" y="520" width="10" height="5" rx="1" fill="#e9e9e9"/>
<rect x="271.500" y="524.500" width="13" height="18" rx="1.800" fill="#efefef"/>
<rect x="271.500" y="527" width="13" height="2.200" fill="#cfcfcf"/>
<circle cx="277.800" cy="531.300" r="1.700" fill="#f3ab5c"/>
<rect x="272.500" y="534" width="11" height="1" fill="#dedede"/>
<rect x="272" y="536.800" width="12" height="1.800" fill="#f4bb6a"/>
<rect x="273" y="539.500" width="10" height=".8" fill="#cfcfcf"/>
<rect x="273" y="557.300" width="10" height="5" rx="1.200" fill="#e6e6e6"/>
<rect x="270" y="561.800" width="15.300" height="20" rx="2.500" fill="#ededed"/>
<rect x="276.500" y="569.500" width="3" height="1.300" fill="#d9534f"/>
</g></svg>

<!-- SIDEBAR -->
<div id="side">
  <div class="head">
<svg class="abs" style="left:36px;top:0" width="26" height="30" viewBox="36 0 26 30"><path d="M38.70 3.13 C38.77 2.88 40.15 2.83 41.13 3.05 C42.12 3.26 43.62 3.78 44.61 4.42 C45.59 5.05 46.40 6.05 47.04 6.86 C47.68 7.67 48.02 8.60 48.43 9.29 C48.84 9.98 49.07 10.77 49.48 11.00 C49.89 11.23 50.29 10.68 50.87 10.68 C51.45 10.68 52.15 10.83 52.96 11.03 C53.77 11.23 54.78 11.56 55.74 11.87 C56.70 12.18 58.72 12.63 58.72 12.87 C58.72 13.11 56.64 13.22 55.74 13.32 C54.84 13.42 53.94 13.35 53.30 13.46 C52.66 13.58 52.30 13.70 51.91 14.01 C51.52 14.32 51.36 14.68 50.97 15.30 C50.58 15.92 50.10 16.93 49.58 17.74 C49.06 18.55 48.42 19.48 47.84 20.17 C47.26 20.87 46.56 21.39 46.10 21.91 C45.64 22.43 45.38 22.62 45.06 23.30 C44.74 23.98 44.46 26.00 44.16 26.00 C43.86 26.00 43.45 24.16 43.26 23.30 C43.07 22.45 43.03 21.74 43.05 20.87 C43.07 20.00 43.22 19.02 43.40 18.09 C43.58 17.16 43.87 16.11 44.10 15.30 C44.33 14.49 44.72 13.92 44.80 13.22 C44.88 12.53 44.77 11.88 44.60 11.13 C44.43 10.38 44.13 9.45 43.76 8.70 C43.39 7.95 42.91 7.31 42.40 6.61 C41.89 5.91 41.32 5.10 40.70 4.52 C40.08 3.94 38.63 3.38 38.70 3.13Z" fill="#11a4e8"/></svg>
<div class="abs" style="left:52.900px;top:7.100px;font-size:17.600px;line-height:24px;font-weight:bold;color:#2b2b2b;letter-spacing:.35px">nody</div>
<div class="abs" style="left:145.300px;top:12.300px;width:11.700px;height:1.500px;background:#333;box-shadow:0 3px 0 #333,0 6px 0 #333"></div>
</div>
<div class="mi" style="top:39.5px"><span class="ic" style="left:7.900px;top:10.900px"><svg viewBox="0 0 33 21" width="16.500" height="10.500"><path d="M0 21 V16.500 A16.500 16.500 0 0 1 33 16.500 V21Z" fill="#1aa97f"/><g fill="#fff"><circle cx="4.500" cy="16.500" r="1.300"/><circle cx="6.500" cy="10" r="1.300"/><circle cx="11" cy="5.500" r="1.300"/><circle cx="16.500" cy="4" r="1.300"/><circle cx="28.500" cy="16.500" r="1.300"/><circle cx="26.500" cy="10" r="1.300"/></g><path d="M14.500 18 L25 6" stroke="#d8412f" stroke-width="2.300" stroke-linecap="round"/><path d="M20 11.500 L25.500 5.200" stroke="#5a3a36" stroke-width="1.400" stroke-linecap="round"/></svg></span><span class="t">Základní přehled</span></div>
<div class="mi act" style="top:72.2px"><span class="ic" style="left:8.800px;top:9.500px"><svg viewBox="0 0 30 28" width="14.700" height="13.700"><path d="M14 9 L24.500 1.200" stroke="#e2382c" stroke-width="2.800" stroke-linecap="round"/><rect x="0" y="7" width="30" height="5.500" rx="1.500" fill="#fbb62b"/><path d="M1.500 12 h27 l-1.500 13.500 a2.500 2.500 0 0 1-2.500 2.500 h-19 a2.500 2.500 0 0 1-2.500-2.500z" fill="#fcc23c"/><g stroke="#f7aa26" stroke-width="1.100"><path d="M8.500 13v14 M15 13v14 M21.500 13v14 M2.500 17.500h25 M3 22.500h24"/></g></svg></span><span class="t">Objednávky</span><i class="card"></i></div>
<div class="sub" style="top:105.00px"><span>Přehled</span></div>
<div class="sub cur" style="top:126.78px"><span>Daňové doklady</span></div>
<div class="sub" style="top:148.56px"><span>Dobropisy</span></div>
<div class="sub" style="top:170.34px"><span>Proforma faktury</span></div>
<div class="sub" style="top:192.12px"><span>Dodací listy</span></div>
<div class="sub" style="top:213.90px"><span>Reklamace</span></div>
<div class="sub" style="top:235.68px;height:22px"><span>Export</span></div>
<div class="mi" style="top:257.5px"><span class="t">Produkty</span><i class="car"></i></div>
<div class="mi" style="top:290.22px"><span class="t">Obsah</span><i class="car"></i></div>
<div class="mi" style="top:322.94px"><span class="t">Vzhled</span><i class="car"></i></div>
<div class="mi" style="top:355.66px"><span class="t">Marketing</span><i class="car"></i></div>
<div class="mi" style="top:388.38px"><span class="t">Propojení</span><i class="car"></i></div>
<div class="mi" style="top:421.1px"><span class="t">Pokladna</span><i class="car"></i></div>
<div class="mi" style="top:453.82px"><span class="t">Zákazníci</span><i class="car"></i></div>
<div class="mi" style="top:486.54px"><span class="t">Statistiky</span><i class="car"></i></div>
<div class="mi" style="top:519.26px"><span class="t">Nastavení</span><i class="car"></i></div>
<svg class="abs" style="left:8px;top:268px" width="17" height="15" viewBox="8 268 17 15"><path d="M11.300 269.400 h9.600 l2.300 6.800 h-14.200z" fill="#f9b934"/><path d="M12.200 270.500 h7.800 l1.700 5.300 h-11.200z" fill="#e4e9ec"/><path d="M8.900 275.800 h4.300 l.8 1.500 h4.200 l.8 -1.500 h4.300 v4.300 a1 1 0 0 1 -1 1 h-12.400 a1 1 0 0 1 -1 -1z" fill="#f8a51c"/><path d="M8.900 280 h14.400 v.500 a.8 .8 0 0 1 -.8 .8 h-12.800 a.8 .8 0 0 1 -.8 -.8z" fill="#ef9412"/></svg>
<svg class="abs" style="left:10px;top:299.5px" width="14" height="15" viewBox="10 299.5 14 15"><path d="M11.400 300.200 h7 l4 4 v8.700 a.8 .8 0 0 1 -.8 .8 h-10.200 a.8 .8 0 0 1 -.8 -.8 v-11.900 a.8 .8 0 0 1 .8 -.8z" fill="#adb7ba"/><path d="M18.400 300.200 l4 4 h-3.200 a.8 .8 0 0 1 -.8 -.8z" fill="#828f93"/><g stroke="#9da7ab" stroke-width=".600"><path d="M12.300 305.500 h8.500 M12.300 307.200 h8.500 M12.300 308.900 h8.500 M12.300 310.600 h8.500 M12.300 312.300 h8.500"/></g></svg>
<svg class="abs" style="left:8.5px;top:332.5px" width="16" height="14" viewBox="8.5 332.5 16 14"><rect x="9" y="333" width="14.300" height="12.400" rx="1" fill="#b7c1c6"/><rect x="10.200" y="334.100" width="11.900" height="8.800" fill="#f7941d"/><circle cx="19" cy="336.500" r="1.300" fill="#ffd35a"/><path d="M10.200 342.900 L14.300 337 l3 3.800 1.600 -1.600 3.200 3.700z" fill="#e8541e"/><path d="M10.200 342.900 L14.300 337 l1.500 1.900 -2.200 4z" fill="#f26a25"/><rect x="9" y="344.200" width="14.300" height="1.200" rx=".5" fill="#a3afb5"/></svg>
<svg class="abs" style="left:7.5px;top:365px" width="18" height="15" viewBox="7.5 365 18 15"><rect x="8" y="365.900" width="16.100" height="9.400" fill="#13ae82"/><path d="M9.600 370.600 c2 -3.300 5 -3.700 6.600 -3.700 s5 .4 6.600 3.700 c-1.600 3.300 -5 3.700 -6.600 3.700 s-4.600 -.4 -6.600 -3.700z" fill="#e9f7f1"/><circle cx="16.200" cy="370.700" r="2.900" fill="#13ae82"/><text x="16.200" y="372.700" font-size="5.400" font-weight="bold" text-anchor="middle" fill="#fff" font-family="Liberation Sans, sans-serif">0</text><rect x="9" y="370.600" width="3.900" height="7.800" rx="1.300" fill="#f7a21b"/><g stroke="#f58a1f" stroke-width=".450"><path d="M9 372.500 h3.900 M9 374.200 h3.900 M9 375.900 h3.900"/></g><ellipse cx="16" cy="376.600" rx="2.600" ry="1.300" fill="#f7a21b"/><ellipse cx="16" cy="376.200" rx="2.600" ry="1.100" fill="#fbb73a"/></svg>
<svg class="abs" style="left:8px;top:396.5px" width="17" height="15" viewBox="8 396.5 17 15"><g fill="none" stroke="#929da1"><circle cx="13.600" cy="405" r="3.150" stroke-width="1.400"/><circle cx="13.600" cy="405" r="4.300" stroke-width="1.300" stroke-dasharray="1.050 1.200"/><circle cx="18.800" cy="399.800" r="1.700" stroke-width=".9"/><circle cx="21.100" cy="404.100" r="2.100" stroke-width=".9"/></g></svg>
<svg class="abs" style="left:10px;top:429.5px" width="13" height="16" viewBox="10 429.5 13 16"><rect x="10.900" y="430.300" width="10.300" height="14.300" rx="1.200" fill="#82979d"/><rect x="12" y="431.400" width="8.100" height="3" fill="#40565f"/><g fill="#f1f4f5"><rect x="12" y="435.700" width="3.600" height="3.300" rx=".4"/><rect x="16.500" y="435.700" width="3.600" height="3.300" rx=".4"/><rect x="12" y="440" width="3.600" height="3.300" rx=".4"/></g><rect x="16.500" y="440" width="3.600" height="3.300" rx=".4" fill="#f6c9c4"/><rect x="17.600" y="440.500" width="1.500" height="2.300" fill="#e8524a"/><g fill="#33475a"><rect x="13" y="436.800" width="1.600" height="1.100"/><rect x="17.500" y="436.800" width="1.600" height="1.100"/><rect x="13" y="441.100" width="1.600" height="1.100"/></g></svg>
<svg class="abs" style="left:7px;top:460px" width="18" height="18.5" viewBox="7 460 18 18.5"><path d="M7.800 477.600 c.2 -3 2.500 -4.300 5.400 -4.900 l3 2.300 3 -2.300 c2.900 .6 5.200 1.900 5.400 4.900z" fill="#e8541e"/><path d="M13.700 472.400 l2.500 3.800 2.500 -3.800 -.5 -1.500 h-4z" fill="#aecbd9"/><ellipse cx="16.200" cy="467" rx="4.700" ry="6.100" fill="#1d3b53"/><ellipse cx="16.200" cy="468.600" rx="2.900" ry="4.500" fill="#c7cfd5"/></svg>
<svg class="abs" style="left:9.5px;top:494px" width="15" height="17" viewBox="9.5 494 15 17"><rect x="10.200" y="496.300" width="12" height="13.700" rx=".9" fill="#a9b7c0"/><rect x="11.200" y="498.600" width="10" height="10.300" fill="#d3dce2"/><g stroke="#6c7b85" stroke-width=".9" stroke-linecap="round"><path d="M12.400 495.400 v2.600 M14.900 495.400 v2.600 M17.400 495.400 v2.600 M19.900 495.400 v2.600"/></g><g stroke="#bcc7ce" stroke-width=".5"><path d="M12 501 h5 M12 503 h3.500 M12 507 h8"/></g><path d="M15.900 505.400 L21.600 500.400" stroke="#f26522" stroke-width="2.300" stroke-linecap="round"/><path d="M14.400 506.900 l.6 -2 1.600 1.500z" fill="#f5e3cf"/><circle cx="14.700" cy="506.600" r=".5" fill="#4a6a7a"/></svg>
<svg class="abs" style="left:8px;top:527px" width="17" height="16" viewBox="8 527 17 16"><path d="M22.600 528.200 L16.500 534.500" stroke="#6d8590" stroke-width=".9" stroke-linecap="round"/><path d="M16.800 534 L10.700 540" stroke="#f7a11a" stroke-width="3.200" stroke-linecap="round"/><path d="M15.300 535.700 L13.800 537.200" stroke="#f26b21" stroke-width="3.200"/><path d="M13.800 532.600 L21.300 540.200" stroke="#6d8590" stroke-width="2.400" stroke-linecap="round"/><circle cx="21.100" cy="540" r=".6" fill="#fff"/><path d="M14.800 531.400 a3.100 3.100 0 0 1 -5.200 2.300 l2.300 -1.100 .1 -1.700 -1.900 -1.300 a3.100 3.100 0 0 1 4.700 1.800z" fill="#6d8590"/></svg>
<div class="abs" style="left:6px;top:567.5px;width:81px;height:20px;background:#1ec67f;border-radius:3px"></div>
</div>

</div>
</body>
</html>
